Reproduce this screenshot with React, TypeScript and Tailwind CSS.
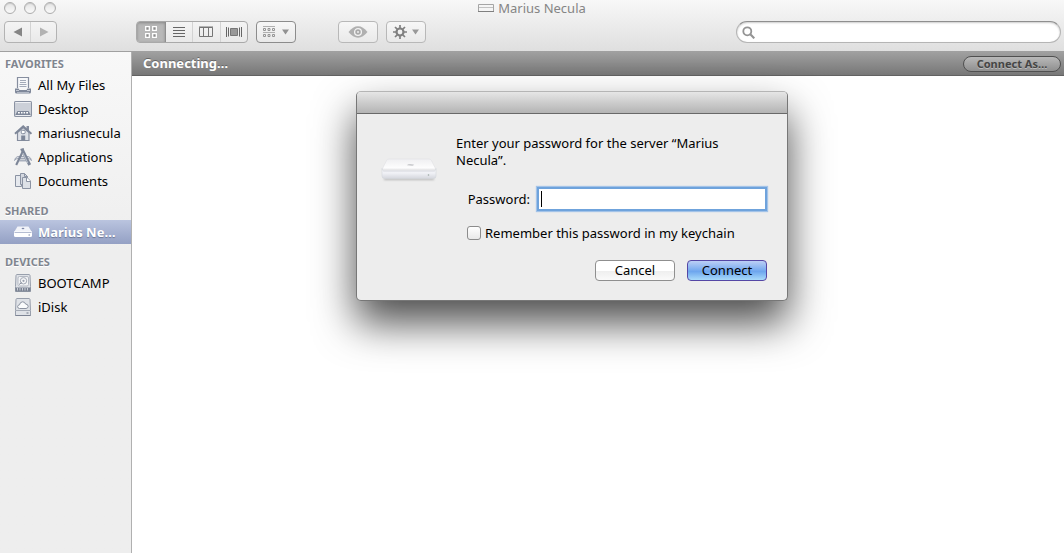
import { useState } from "react";
import type { ReactNode } from "react";

const icon = "h-[18px] w-[18px] shrink-0";

function AllFilesIcon() {
  return (
    <svg viewBox="0 0 18 18" className={icon} fill="none">
      <path d="M3.500 12V1.500h11V12" fill="#f7f8fa" stroke="#868e9f" strokeWidth="1.200" />
      <path d="M6 4.500h6M6 6.500h6M5.500 8.500h7M5.500 10.500h7" stroke="#a3aab8" />
      <path d="M1 12.500h3.500l1 1.500h7l1-1.500H17v3.500q0 1.500-1.500 1.500h-13Q1 17.500 1 16z" fill="#7f889a" />
      <path d="M2 14.500h3M13 14.500h3" stroke="#c3c8d2" />
      <path d="M3 16.500h12" stroke="#b4bac6" />
    </svg>
  );
}

function DesktopIcon() {
  return (
    <svg viewBox="0 0 18 18" className={icon}>
      <rect x=".5" y="1.5" width="17" height="15" rx=".6" fill="#ccd0d8" stroke="#8a92a2" />
      <path d="M1.500 2.500h15" stroke="#eef0f4" />
      <path d="M3.500 11h11l2.500 4.500H1z" fill="#7d8698" />
      <path d="M4 12.800h1.800M7 12.800h1.500M9.600 12.800h1.500M12.200 12.800h1.800" stroke="#fff" strokeWidth="1.600" />
      <path d="M1.500 15.500h15" stroke="#eceef2" />
    </svg>
  );
}

function HomeIcon() {
  return (
    <svg viewBox="0 0 18 18" className={icon}>
      <path d="M3.500 8.500v8h11.500v-8L9.200 3.500z" fill="#dfe2e8" stroke="#858d9e" strokeWidth="1.200" />
      <path d="M12.500 2h2.500v5.500l-2.500-2.300z" fill="#858d9e" />
      <path d="M1 9.800 9.200 2.200l8.200 7.600" fill="none" stroke="#7d8698" strokeWidth="1.900" />
      <rect x="7.300" y="6.300" width="3.800" height="3.400" rx="1" fill="#fff" stroke="#7d8698" />
      <path d="M7.200 11.500h4v5h-4z" fill="#7d8698" />
    </svg>
  );
}

function ApplicationsIcon() {
  return (
    <svg viewBox="0 0 18 18" className={icon} fill="none">
      <path d="M.5 12.500q.5-3 3-4h11q2.500 1 3 4-2-2-3.500-2H4q-2 0-3.500 2z" fill="#d7dbe2" stroke="#9098a8" strokeWidth=".8" />
      <path d="M5 13.500h8l-1-2H6z" fill="#a9b0bd" />
      <path d="M9 3 2.200 17" stroke="#7d8698" strokeWidth="2.100" />
      <path d="M8.200 1.500 15.700 17" stroke="#7d8698" strokeWidth="3" />
      <path d="m9 5 4.800 10" stroke="#c3c9d3" strokeWidth=".9" />
      <path d="M6.500 1.800 9.800.7" stroke="#7d8698" strokeWidth="1.600" />
    </svg>
  );
}

function DocumentsIcon() {
  return (
    <svg viewBox="0 0 18 18" className={icon} stroke="#8b93a3">
      <path d="M1.500 3.500h6v11h-6z" fill="#e6e9ee" />
      <path d="M6.500 1.500h4l3 3v8h-7z" fill="#d4d8e0" />
      <path d="M10.500 1.500v3h3" fill="none" />
      <path d="M8.500 5.500h4.500l3.500 3.500v7.500h-8z" fill="#dde1e7" />
      <path d="M12.500 5.500v4h4" fill="#fff" />
    </svg>
  );
}

function ServerIcon() {
  return (
    <svg viewBox="0 0 18 18" className={icon}>
      <path d="M3.500 3.500h11L17.800 9H.2z" fill="#f1f3f9" />
      <path d="M0 8.500h18v4Q18 14 16.500 14h-15Q0 14 0 12.500z" fill="#fff" />
      <path d="M.5 9.500h17" stroke="#b5bdd2" />
      <ellipse cx="9" cy="5.500" rx="1.400" ry=".8" fill="#7e88a8" />
      <path d="M14.500 12h1.500" stroke="#7e88a8" />
    </svg>
  );
}

function DriveIcon({ cloud = false }: { cloud?: boolean }) {
  return (
    <svg viewBox="0 0 18 18" className={icon} fill="none">
      <path d="M3 .5h12q.8 0 1 1l.5 11v5h-15v-5L2 1.500q.2-1 1-1z" fill="#dfe2e7" stroke="#989fac" />
      {cloud ? (
        <>
          <path d="M5.500 10.500Q3.500 10.300 3.600 8.500 3.800 7 5.500 6.800 6 4 8.500 3.800 11 3.800 11.500 6q2.700.2 2.700 2.400-.2 2-2.200 2.100z" fill="#fafbfc" stroke="#8b92a0" />
          <path d="M2 12.500h14" stroke="#a5abb6" />
          <path d="M1.500 17.500h15" stroke="#7d8494" />
          <path d="M12.500 15h2" stroke="#6f7786" />
        </>
      ) : (
        <>
          <rect x="4" y="2.500" width="10.500" height="9.500" rx="1.500" fill="#f3f4f6" stroke="#b3b8c2" />
          <circle cx="9.500" cy="6.800" r="3.200" stroke="#a3a9b5" />
          <circle cx="9.500" cy="6.800" r="1.100" fill="#9aa1ae" />
          <path d="m5 10.500 3-2" stroke="#8b92a0" />
          <path d="M1.500 13.500h15v4h-15z" fill="#7b8393" />
          <path d="M3.500 14v2.500M6 14v2.500M8.500 14v2.500M11 14v2.500M13.500 14v2.500" stroke="#dfe2e7" strokeWidth=".8" />
        </>
      )}
    </svg>
  );
}

function BaseStation() {
  return (
    <svg viewBox="0 0 56 30" className="h-[30px] w-[56px]" aria-hidden="true">
      <defs>
        <linearGradient id="top" x2="0" y2="1">
          <stop stopColor="#efeff1" />
          <stop offset="1" stopColor="#fff" />
        </linearGradient>
        <linearGradient id="front" x2="0" y2="1">
          <stop stopColor="#fbfbfd" />
          <stop offset=".5" stopColor="#eeeff4" />
          <stop offset="1" stopColor="#d5d7de" />
        </linearGradient>
        <filter id="soft" x="-10%" y="-100%" width="120%" height="300%">
          <feGaussianBlur stdDeviation="1" />
        </filter>
      </defs>
      <path d="M3 23h50v2H3z" fill="#b5b5b5" filter="url(#soft)" />
      <path d="M8 4h40q1.500 0 2.300 1.200L54.700 14H1.300L5.700 5.200Q6.500 4 8 4z" fill="url(#top)" stroke="#e0e1e4" strokeWidth=".6" />
      <path d="M1 13.500q0 2 2 2.500h50q2-.5 2-2.500V21q0 2.500-2.500 2.500h-49Q1 23.500 1 21z" fill="url(#front)" stroke="#d4d6dc" strokeWidth=".6" />
      <path d="M2 16h52" stroke="#dfe0e6" />
      <path d="M26 10.300q.5-1.300 3-1.300t4 .4q-1 .8-.5 1.200-2 .5-6.500-.3z" fill="#c8c9cc" />
      <circle cx="47.500" cy="20" r=".8" fill="#9ba8a4" />
    </svg>
  );
}

function Item({ glyph, children, selected = false }: { glyph: ReactNode; children: ReactNode; selected?: boolean }) {
  return (
    <li>
      <a
        href="#"
        className={
          "flex h-6 items-center gap-1.5 pl-3.5 whitespace-nowrap " +
          (selected
            ? "bg-linear-to-b from-[#bac4df] to-[#94a0c4] font-bold text-white [text-shadow:0_1px_1px_#6b7594]"
            : "text-black")
        }
      >
        {glyph}
        <span className="pt-0.5">{children}</span>
      </a>
    </li>
  );
}

function Section({ title, children }: { title: string; children: ReactNode }) {
  return (
    <section>
      <h2 className="h-[18px] pl-[5px] text-[11px] leading-[18px] font-bold text-[#80858f] [text-shadow:0_1px_0_#fff]">{title}</h2>
      <ul>{children}</ul>
    </section>
  );
}

const toolButton = "flex h-[22px] w-10 items-center justify-center rounded-[4px] border bg-linear-to-b from-[#f7f7f7] to-[#e9e9e9]";

function Toolbar() {
  return (
    <div className="mt-[5px] flex h-[22px] items-center px-1">
      <div className="flex h-[22px] w-[53px] rounded-[4px] border border-[#b3b3b3] bg-linear-to-b from-[#f4f4f4] to-[#e9e9e9]">
        <button aria-label="Back" className="flex flex-1 items-center justify-center border-r border-[#d3d3d3]">
          <svg viewBox="0 0 10 10" className="h-2.5 w-2.5"><path d="M9 .5v9L.5 5z" fill="#858585" /></svg>
        </button>
        <button aria-label="Forward" className="flex flex-1 items-center justify-center">
          <svg viewBox="0 0 10 10" className="h-2.5 w-2.5"><path d="M1 .5v9L9.500 5z" fill="#b2b2b2" /></svg>
        </button>
      </div>

      <div className="ml-[79px] flex h-[22px] w-28 overflow-hidden rounded-[4px] border border-[#a9a9a9] bg-linear-to-b from-[#f4f4f4] to-[#e9e9e9]">
        <button aria-label="Icon view" className="flex w-[29px] items-center justify-center border-r border-[#8e8e8e] bg-[#b8b8b8] shadow-[inset_0_1px_3px_#888]">
          <svg viewBox="0 0 12 12" className="h-3 w-3" fill="#8c8c8c" stroke="#fff" strokeWidth="1.300">
            <path d="M.7.700h3.600v3.600H.7zM7.700.700h3.600v3.600H7.700zM.7 7.700h3.600v3.600H.7zM7.700 7.700h3.600v3.600H7.700z" />
          </svg>
        </button>
        <button aria-label="List view" className="flex flex-1 items-center justify-center border-r border-[#d3d3d3]">
          <svg viewBox="0 0 12 12" className="h-3 w-3"><path d="M0 1.500h12M0 4.500h12M0 7.500h12M0 10.500h12" stroke="#666" /></svg>
        </button>
        <button aria-label="Column view" className="flex flex-1 items-center justify-center border-r border-[#d3d3d3]">
          <svg viewBox="0 0 14 12" className="h-3 w-3.5" fill="none" stroke="#757575"><path d="M.5 1.500h13v9H.5zM4.500 1.500v9M9.500 1.500v9M0 1h14" /></svg>
        </button>
        <button aria-label="Cover Flow" className="flex flex-1 items-center justify-center">
          <svg viewBox="0 0 16 12" className="h-3 w-4" stroke="#666"><path d="M.5 1v10M2.500 1.500v9M13.500 1.500v9M15.500 1v10" /><path d="M4.500 2.500h7v7h-7z" fill="#999" stroke="#777" /></svg>
        </button>
      </div>

      <button aria-label="Arrange" className={toolButton + " ml-2 gap-[7px] border-[#8c8c8c]"}>
        <svg viewBox="0 0 12 12" className="h-3 w-3" fill="none" stroke="#959595">
          <path d="M0 .5h12M0 6.500h12" stroke="#b0b0b0" />
          <path d="M.5 2.500h2v2h-2zM5 2.500h2v2H5zM9.500 2.500h2v2h-2zM.5 8.500h2v2h-2zM5 8.500h2v2H5zM9.500 8.500h2v2h-2z" />
        </svg>
        <svg viewBox="0 0 7 6" className="h-1.5 w-[7px]"><path d="M0 .5h7L3.500 5.500z" fill="#929292" /></svg>
      </button>

      <button aria-label="Quick Look" className={toolButton + " ml-[42px] border-[#b8b8b8]"}>
        <svg viewBox="0 0 20 12" className="h-3 w-5">
          <path d="M.5 6Q5 .3 10 .3T19.500 6Q15 11.700 10 11.700T.5 6z" fill="#b0b0b0" />
          <circle cx="10" cy="6" r="3.400" fill="#aaa" stroke="#f4f4f4" strokeWidth="1.300" />
          <circle cx="10" cy="6" r="1" fill="#eee" />
        </svg>
      </button>

      <button aria-label="Action" className={toolButton + " ml-2 gap-[5px] border-[#b8b8b8]"}>
        <svg viewBox="0 0 14 14" className="h-3.5 w-3.5" fill="none" stroke="#808080">
          <circle cx="7" cy="7" r="3.500" strokeWidth="2.200" />
          <path d="M7 0v3M7 11v3M0 7h3M11 7h3M2 2l2.200 2.200M9.800 9.800 12 12M12 2 9.800 4.200M4.200 9.800 2 12" strokeWidth="1.700" />
        </svg>
        <svg viewBox="0 0 7 6" className="h-1.5 w-[7px]"><path d="M0 .5h7L3.500 5.500z" fill="#999" /></svg>
      </button>

      <label className="-mr-px ml-auto flex h-[22px] w-[325px] items-center rounded-full border border-[#b5b5b5] border-t-[#8f8f8f] bg-white pl-[5px] shadow-[inset_0_1px_2px_#ccc]">
        <svg viewBox="0 0 13 13" className="h-[13px] w-[13px] shrink-0" fill="none" stroke="#949494">
          <circle cx="5.300" cy="5.300" r="4" strokeWidth="1.800" />
          <path d="m8.300 8.300 4 4" strokeWidth="2.200" />
        </svg>
        <input type="search" aria-label="Search" className="min-w-0 flex-1 bg-transparent px-1 outline-none" />
      </label>
    </div>
  );
}

function PasswordDialog() {
  const [password, setPassword] = useState("");
  const pushButton = "h-[21px] w-20 rounded-[4px] border text-center leading-[19px]";
  return (
    <form
      role="dialog"
      aria-label="Server password"
      onSubmit={(e) => e.preventDefault()}
      className="w-[432px] rounded-[5px] border border-[#777] border-t-[#b5b5b5] bg-[#ededed] shadow-[0_22px_42px_rgba(0,0,0,0.7)]"
    >
      <div className="h-[22px] rounded-t-[4px] border-b border-[#696969] bg-linear-to-b from-[#e6e6e6] to-[#b4b4b4]" />
      <div className="flex pt-[21px] pr-5 pb-[19px] pl-6">
        <div className="w-[75px] shrink-0 pt-5">
          <BaseStation />
        </div>
        <div className="flex-1">
          <p className="w-72 leading-[17px]">Enter your password for the server “Marius Necula”.</p>
          <div className="mt-5 flex h-5 items-center justify-end">
            <label htmlFor="password" className="mr-[9px] pt-0.5">Password:</label>
            <div className="relative mr-0.5 flex">
              <input
                id="password"
                type="password"
                value={password}
                onChange={(e) => setPassword(e.target.value)}
                className="h-5 w-[226px] bg-white px-[3px] shadow-[0_0_0_2px_#6fa3dc,0_0_1px_3px_#a3c3e8] outline-none"
              />
              {password === "" && <span className="pointer-events-none absolute top-0.5 left-0.5 h-4 w-px bg-black" />}
            </div>
          </div>
          <label className="mt-[17px] ml-[11px] flex h-[14px] items-center gap-1 whitespace-nowrap">
            <input
              type="checkbox"
              className="h-3.5 w-3.5 appearance-none rounded-[3px] border border-[#8c8c8c] bg-linear-to-b from-white to-[#e9e9e9] checked:bg-[#4a8fe0]"
            />
            <span className="pt-0.5">Remember this password in my keychain</span>
          </label>
          <div className="mt-5 flex justify-end gap-3">
            <button type="button" className={pushButton + " border-[#8f8f8f] bg-linear-to-b from-white from-50% via-[#efefef] via-55% to-[#fafafa]"}>
              Cancel
            </button>
            <button type="submit" className={pushButton + " border-[#5547a5] bg-linear-to-b from-[#bccff5] via-[#6ea6ee] via-55% to-[#a9dbfa]"}>
              Connect
            </button>
          </div>
        </div>
      </div>
    </form>
  );
}

export default function App() {
  const light = "h-3 w-3 rounded-full border border-[#adadad] bg-linear-to-b from-[#e4e4e4] to-[#fafafa] shadow-[inset_0_1px_1px_#c8c8c8]";
  return (
    <div className="relative flex min-h-screen flex-col bg-white font-['Noto_Sans','Open_Sans',sans-serif] text-[13px] text-black">
      <header className="h-[52px] border-b border-[#a0a0a0] bg-linear-to-b from-[#f8f8f8] to-[#dfdfdf]">
        <div className="grid h-4 grid-cols-[1fr_auto_1fr] items-center">
          <div className="flex gap-2 pl-1">
            <button aria-label="Close" className={light} />
            <button aria-label="Minimize" className={light} />
            <button aria-label="Zoom" className={light} />
          </div>
          <h1 className="flex items-center gap-1 leading-4 text-[#858585]">
            <svg viewBox="0 0 16 8" className="h-2 w-4">
              <path d="M.5.5h15v7H.5z" fill="#f5f5f5" stroke="#a5a5a5" />
              <path d="M1 3.500h14" stroke="#c2c2c2" />
              <path d="M0 7.500h16" stroke="#808080" />
            </svg>
            Marius Necula
          </h1>
        </div>
        <Toolbar />
      </header>

      <div className="flex flex-1">
        <nav className="flex w-[132px] shrink-0 flex-col gap-[9px] border-r border-[#b0b0b0] bg-linear-to-b from-[#f8f8f8] to-[#eeeeee] to-40% pt-[3px]">
          <Section title="FAVORITES">
            <Item glyph={<AllFilesIcon />}>All My Files</Item>
            <Item glyph={<DesktopIcon />}>Desktop</Item>
            <Item glyph={<HomeIcon />}>mariusnecula</Item>
            <Item glyph={<ApplicationsIcon />}>Applications</Item>
            <Item glyph={<DocumentsIcon />}>Documents</Item>
          </Section>
          <Section title="SHARED">
            <Item glyph={<ServerIcon />} selected>Marius Ne…</Item>
          </Section>
          <Section title="DEVICES">
            <Item glyph={<DriveIcon />}>BOOTCAMP</Item>
            <Item glyph={<DriveIcon cloud />}>iDisk</Item>
          </Section>
        </nav>
        <main className="min-w-0 flex-1">
          <div className="flex h-6 items-center justify-between border-b border-[#626262] bg-linear-to-b from-[#a0a0a0] to-[#777] pr-[3px] pl-[11px]">
            <p className="font-bold text-white [text-shadow:0_-1px_0_#666]">Connecting…</p>
            <button className="h-4 w-[98px] rounded-full border border-[#505050] bg-linear-to-b from-[#b9b9b9] to-[#8f8f8f] text-[11px] leading-[14px] font-bold text-[#454545] [text-shadow:0_1px_0_#bbb]">
              Connect As…
            </button>
          </div>
        </main>
      </div>

      <div className="absolute inset-x-0 top-[91px] flex justify-center pl-20">
        <PasswordDialog />
      </div>
    </div>
  );
}
